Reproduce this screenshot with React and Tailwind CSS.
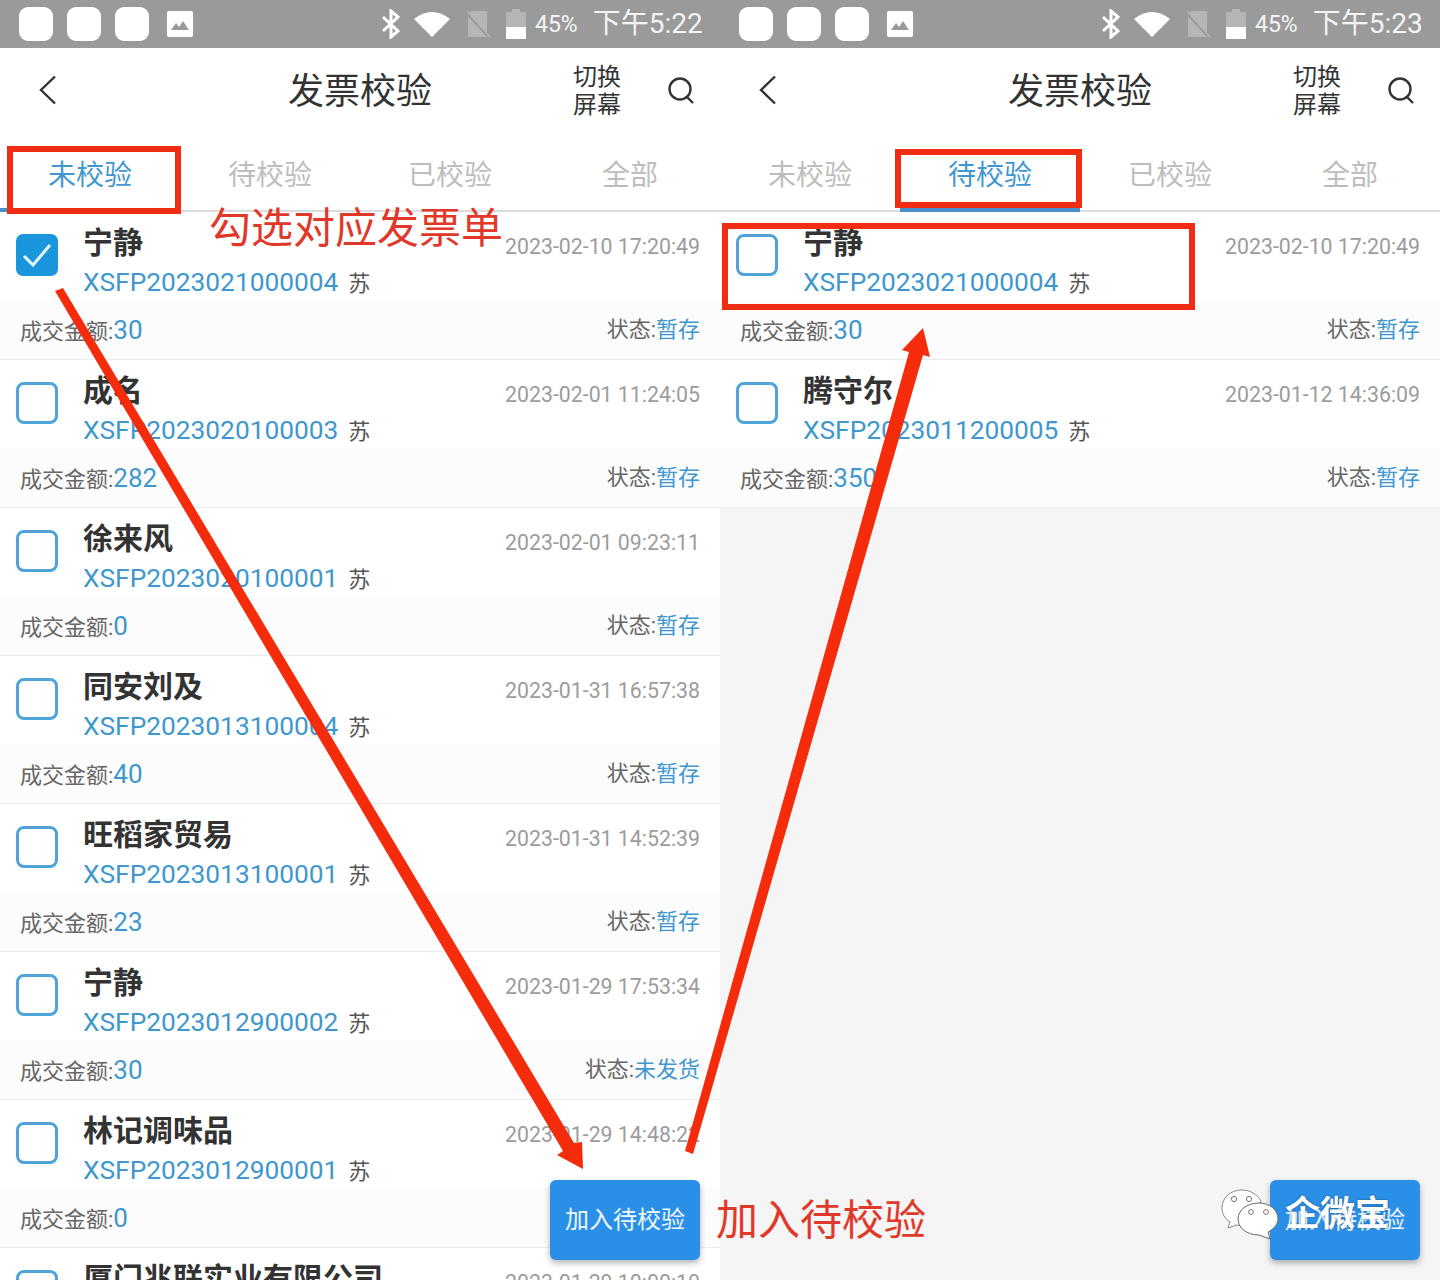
const leftRows = [
  { name: "宁静", no: "XSFP2023021000004", time: "2023-02-10 17:20:49", amount: "30", status: "暂存", checked: true },
  { name: "成名", no: "XSFP2023020100003", time: "2023-02-01 11:24:05", amount: "282", status: "暂存" },
  { name: "徐来风", no: "XSFP2023020100001", time: "2023-02-01 09:23:11", amount: "0", status: "暂存" },
  { name: "同安刘及", no: "XSFP2023013100004", time: "2023-01-31 16:57:38", amount: "40", status: "暂存" },
  { name: "旺稻家贸易", no: "XSFP2023013100001", time: "2023-01-31 14:52:39", amount: "23", status: "暂存" },
  { name: "宁静", no: "XSFP2023012900002", time: "2023-01-29 17:53:34", amount: "30", status: "未发货" },
  { name: "林记调味品", no: "XSFP2023012900001", time: "2023-01-29 14:48:22", amount: "0", status: "暂存" },
  { name: "厦门兆联实业有限公司", no: "XSFP2023012900000", time: "2023-01-29 10:00:10", amount: "0", status: "暂存" },
]

const rightRows = [
  { name: "宁静", no: "XSFP2023021000004", time: "2023-02-10 17:20:49", amount: "30", status: "暂存" },
  { name: "腾守尔", no: "XSFP2023011200005", time: "2023-01-12 14:36:09", amount: "350", status: "暂存" },
]

const tabs = ["未校验", "待校验", "已校验", "全部"]

function StatusBar({ time }) {
  return (
    <div className="h-12 shrink-0 bg-[#9a9a9a] flex items-center text-white">
      <div className="w-[34px] h-[34px] ml-[19px] bg-white rounded-[9px]" />
      <div className="w-[34px] h-[34px] ml-[14px] bg-white rounded-[9px]" />
      <div className="w-[34px] h-[34px] ml-[14px] bg-white rounded-[9px]" />
      <svg width="26" height="26" viewBox="0 0 26 26" className="ml-[18px]">
        <rect width="26" height="26" rx="2" fill="#fff" />
        <path d="M4 19 L9 12 L12 16 L16 10 L22 19 Z" fill="#9a9a9a" />
      </svg>
      <svg width="20" height="30" viewBox="0 0 20 30" className="ml-[188px]" fill="none" stroke="#fff" strokeWidth="3">
        <path d="M2 8 L17 22 L10 28 L10 2 L17 8 L2 22" />
      </svg>
      <svg width="36" height="26" viewBox="0 0 36 26" className="ml-[13px]">
        <path d="M0 8 Q18 -6 36 8 L18 26 Z" fill="#fff" />
      </svg>
      <svg width="26" height="28" viewBox="0 0 26 28" className="ml-[15px]">
        <path d="M6 1 H22 V27 H3 V5 Z" fill="#b5b5b5" />
        <path d="M1 2 L24 27" stroke="#9a9a9a" strokeWidth="3" />
        <path d="M2 1 L25 27" stroke="#b5b5b5" strokeWidth="1.5" />
      </svg>
      <div className="ml-[15px] w-[20px] h-[30px] flex flex-col items-center">
        <div className="w-[8px] h-[3px] bg-[#b5b5b5]" />
        <div className="w-[20px] h-[15px] bg-[#b5b5b5]" />
        <div className="w-[20px] h-[12px] bg-white" />
      </div>
      <span className="ml-[9px] text-[23px] leading-none text-[#f4f4f4]">45%</span>
      <span className="ml-[15px] text-[28px] leading-none text-[#f4f4f4]">下午{time}</span>
    </div>
  )
}

function Header() {
  return (
    <div className="h-[88px] relative flex items-center justify-center text-[#333]">
      <svg width="20" height="30" viewBox="0 0 20 30" fill="none" stroke="#333" strokeWidth="2.4" className="absolute left-[38px] top-[27px]">
        <path d="M17 1.5 L3 15 L17 28.5" />
      </svg>
      <span className="text-[36px] leading-none">发票校验</span>
      <div className="absolute left-[573px] top-[15px] w-12 text-[24px] leading-[28px]">
        切换
        <br />
        屏幕
      </div>
      <svg width="28" height="28" viewBox="0 0 28 28" fill="none" stroke="#333" strokeWidth="2.4" className="absolute left-[667px] top-[28px]">
        <circle cx="13" cy="13" r="10.5" />
        <path d="M20 21 L26 27" />
      </svg>
    </div>
  )
}

function Tabs({ active }) {
  return (
    <div className="h-[76px] flex border-b-2 border-[#dcdcdc]">
      {tabs.map((tab, i) => (
        <div key={tab} className="relative w-[180px] flex items-center justify-center pt-[5px]">
          <span className={`text-[28px] leading-none ${i === active ? "text-[#3f97cf]" : "text-[#bdbdbd]"}`}>{tab}</span>
          {i === active && <div className="absolute left-0 right-0 bottom-[-2px] h-[4px] bg-[#4a8fc9]" />}
        </div>
      ))}
    </div>
  )
}

function Row({ row }) {
  return (
    <div className="h-[148px] shrink-0 bg-white border-b border-[#ececec]">
      <div className="h-[88px] flex pr-5">
        {row.checked ? (
          <div className="w-[42px] h-[42px] ml-4 mt-[22px] rounded-[7px] bg-[#1a96dc] flex items-center justify-center">
            <svg width="32" height="26" viewBox="0 0 32 26" fill="none" stroke="#e8f6ff" strokeWidth="3">
              <path d="M3 14 L12 23 L29 3" />
            </svg>
          </div>
        ) : (
          <div className="w-[42px] h-[42px] ml-4 mt-[22px] rounded-[8px] border-[3px] border-[#4ea3d8]" />
        )}
        <div className="ml-[25px] flex-1 min-w-0">
          <div className="mt-[15px] h-[32px] text-[30px] leading-[32px] font-bold text-[#333] whitespace-nowrap">{row.name}</div>
          <div className="mt-[8px] flex items-center h-[30px] whitespace-nowrap">
            <span className="text-[26.3px] leading-none text-[#3f97cf]">{row.no}</span>
            <span className="ml-[10px] mt-[3px] text-[22px] leading-none text-[#555]">苏</span>
          </div>
        </div>
        <div className="mt-[23px] text-[21.3px] leading-[24px] text-[#9c9c9c] whitespace-nowrap">{row.time}</div>
      </div>
      <div className="h-[59px] bg-[#fcfcfc] flex items-center justify-between px-5">
        <div className="text-[22px] leading-none text-[#666]">
          成交金额:<span className="text-[26px] text-[#3f97cf]">{row.amount}</span>
        </div>
        <div className="text-[22px] leading-none text-[#666]">
          状态:<span className="text-[#3f97cf]">{row.status}</span>
        </div>
      </div>
    </div>
  )
}

function Phone({ time, active, rows, bg }) {
  return (
    <div className={`relative w-[720px] h-[1280px] overflow-hidden flex flex-col ${bg}`}>
      <StatusBar time={time} />
      <div className="bg-white shrink-0">
        <Header />
        <Tabs active={active} />
      </div>
      {rows.map((row) => (
        <Row key={row.no} row={row} />
      ))}
      <div className="absolute right-5 top-[1180px] w-[150px] h-[80px] rounded-[6px] bg-[#2a8fe6] shadow-[0_3px_6px_rgba(0,0,0,0.3)] flex items-center justify-center text-[24px] text-[#eef8ff]">
        加入待校验
      </div>
    </div>
  )
}

function Bubbles() {
  return (
    <svg width="58" height="52" viewBox="0 0 58 52" className="absolute left-[1221px] top-[1189px]">
      <path d="M21 1 C9 1 1 9 1 19 C1 25 4 30 9 33 L7 39 L15 36 C20 37 26 37 30 35 L40 12 C36 5 29 1 21 1 Z" fill="#fff" stroke="#8a8a8a" strokeWidth="1" />
      <circle cx="13" cy="10" r="2.6" fill="#fff" stroke="#777" />
      <circle cx="28" cy="10" r="2.6" fill="#fff" stroke="#777" />
      <path d="M38 14 C26 14 17 21 17 30 C17 39 26 46 38 46 L49 50 L47 43 C53 40 57 35 57 30 C57 21 49 14 38 14 Z" fill="#fff" stroke="#666" strokeWidth="1" />
      <circle cx="30" cy="23" r="2.4" fill="#fff" stroke="#777" />
      <circle cx="45" cy="23" r="2.4" fill="#fff" stroke="#777" />
    </svg>
  )
}

export default function App() {
  return (
    <div className="relative w-[1440px] h-[1280px] overflow-hidden flex font-[Roboto,'Noto_Sans_CJK_SC',sans-serif]">
      <Phone time="5:22" active={0} rows={leftRows} bg="bg-white" />
      <Phone time="5:23" active={1} rows={rightRows} bg="bg-[#f5f5f5]" />

      {/* red annotations drawn over the screenshots */}
      <div className="absolute left-[7px] top-[146px] w-[174px] h-[68px] border-[6px] border-[#f02c12]" />
      <div className="absolute left-[895px] top-[149px] w-[187px] h-[59px] border-[6px] border-[#f02c12]" />
      <div className="absolute left-[722px] top-[223px] w-[473px] h-[87px] border-[6px] border-[#f02c12]" />
      <span className="absolute left-[209px] top-[205px] text-[42px] leading-[48px] text-[#e0392a] whitespace-nowrap">勾选对应发票单</span>
      <span className="absolute left-[716px] top-[1197px] text-[42px] leading-[48px] text-[#e0392a] whitespace-nowrap">加入待校验</span>

      <svg width="1440" height="1280" viewBox="0 0 1440 1280" className="absolute left-0 top-0 pointer-events-none">
        <polygon points="55,291 63,288 574,1143 582,1142 583,1169 557,1155 563,1151" fill="#f42c0c" />
        <polygon points="685,1151 693,1154 923,355 930,357 923,328 902,350 909,352" fill="#f42c0c" />
      </svg>

      <Bubbles />
      <span className="absolute left-[1285px] top-[1193px] text-[35px] leading-[44px] font-bold text-white whitespace-nowrap [text-shadow:0_0_2px_rgba(0,0,0,0.5)]">企微宝</span>
    </div>
  )
}
